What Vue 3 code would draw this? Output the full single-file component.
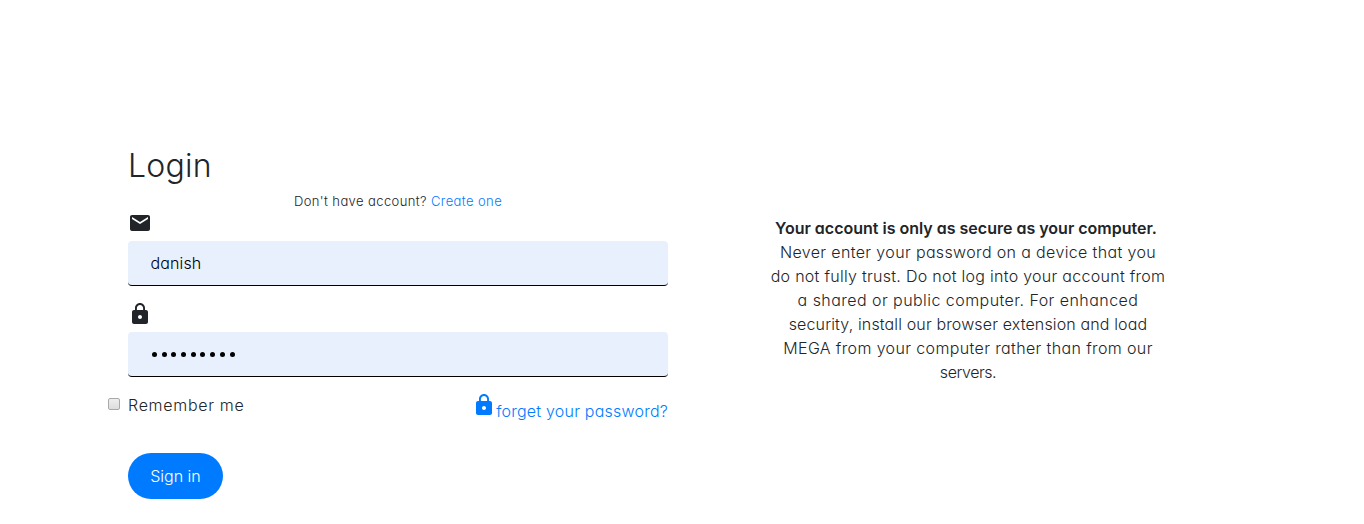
<script setup>
import { ref } from 'vue'

const username = ref('danish')
const password = ref('password1')
const remember = ref(false)
const lockPath =
  'M18 8h-1V6c0-2.76-2.24-5-5-5S7 3.24 7 6v2H6c-1.1 0-2 .9-2 2v10c0 1.1.9 2 2 2h12c1.1 0 2-.9 2-2V10c0-1.1-.9-2-2-2zm-6 9c-1.1 0-2-.9-2-2s.9-2 2-2 2 .9 2 2-.9 2-2 2zm3.1-9H8.9V6c0-1.71 1.39-3.1 3.1-3.1s3.1 1.39 3.1 3.1v2z'
const advice = [
  { text: 'Never enter your password on a device that you', name: 'l1' },
  { text: 'do not fully trust. Do not log into your account from', name: 'l2' },
  { text: 'a shared or public computer. For enhanced', name: 'l3' },
  { text: 'security, install our browser extension and load', name: 'l4' },
  { text: 'MEGA from your computer rather than from our', name: 'l5' },
  { text: 'servers.', name: 'l6' },
]
</script>

<template>
  <main class="page">
    <form class="login" @submit.prevent>
      <h2 class="title"><span>Login</span></h2>
      <p class="signup"><span class="ask">Don't have account?</span><a href="#" class="create">Create one</a></p>
      <svg class="icon mail" viewBox="0 0 24 24"><path d="M20 4H4c-1.1 0-1.99.9-1.99 2L2 18c0 1.1.9 2 2 2h16c1.1 0 2-.9 2-2V6c0-1.1-.9-2-2-2zm0 4l-8 5-8-5V6l8 5 8-5v2z" /></svg>
      <input v-model="username" class="field" type="text" />
      <svg class="icon lock" viewBox="0 0 24 24"><path :d="lockPath" /></svg>
      <div class="field secret"><i v-for="n in password.length" :key="n"></i></div>
      <div class="options">
        <label class="remember"><input v-model="remember" type="checkbox" class="check" /><span>Remember me</span></label>
        <a href="#" class="forgot"><svg class="icon" viewBox="0 0 24 24"><path :d="lockPath" /></svg><span>forget your password?</span></a>
      </div>
      <button class="submit" type="submit"><span>Sign in</span></button>
    </form>
    <aside class="notice">
      <strong>Your account is only as secure as your computer.</strong>
      <p v-for="line in advice" :key="line.name" :class="line.name"><span>{{ line.text }}</span></p>
    </aside>
  </main>
</template>

<style>
body { background: #fff; }
</style>

<style scoped>
* { box-sizing: border-box; }
.page {
  display: flex;
  height: 524px;
  overflow: hidden;
  color: #212529;
  font: 275 16px/24px Inter, "Open Sans", sans-serif;
  font-feature-settings: "cv11" 1;
}
.login { width: 540px; margin-left: 128px; padding-top: 147px; }
.title { margin: 0; font-size: 32px; font-weight: 280; line-height: 38px; letter-spacing: 0.25px; }
.signup {
  display: flex;
  justify-content: center;
  gap: 4px;
  margin: 7px 0 0;
  font-size: 13px;
  line-height: 19px;
  letter-spacing: 0.4px;
}
a { color: #007bff; text-decoration: none; }
.icon { display: block; width: 24px; height: 24px; fill: currentColor; }
.field {
  display: block;
  width: 540px;
  height: 45px;
  margin: 6px 0 0;
  padding: 0 22.5px;
  border: 0;
  border-bottom: 1px solid #000;
  border-radius: 4px;
  background: #e8f0fe;
  color: #000;
  font: inherit;
  font-feature-settings: inherit;
  letter-spacing: 0.12px;
  outline: none;
}
.lock { margin-top: 16px; }
.secret { display: flex; align-items: center; gap: 4.7px; padding: 0 24px; }
.secret i { width: 5px; height: 5px; border-radius: 50%; background: #000; }
.options { display: flex; justify-content: space-between; height: 76px; padding-top: 16px; }
.remember { display: flex; height: 24px; margin-left: -20px; letter-spacing: 0.7px; }
.check {
  appearance: none;
  width: 12px;
  height: 12px;
  margin: 5px 8px 0 0;
  border: 1px solid #a9a9a9;
  border-radius: 2px;
  background: linear-gradient(#eee, #ddd);
}
.forgot { display: flex; letter-spacing: 0.22px; }
.forgot span { padding-top: 6px; }
.submit {
  width: 95px;
  height: 46px;
  padding: 0;
  border: 0;
  border-radius: 23px;
  background: #007bff;
  color: #fff;
  font: inherit;
  font-weight: 300;
  font-feature-settings: inherit;
}
.notice { width: 400px; margin-left: 100px; padding-top: 216px; text-align: center; white-space: nowrap; }
.notice strong { display: block; margin-right: 4px; font-weight: 600; }
.notice p { margin: 0; }
.l1 { letter-spacing: 0.36px; }
.l2 { letter-spacing: 0.28px; }
.l3 { letter-spacing: 0.45px; }
.l4 { letter-spacing: 0.14px; }
.l5 { letter-spacing: 0.37px; }
.l6 { letter-spacing: -0.45px; }
</style>
